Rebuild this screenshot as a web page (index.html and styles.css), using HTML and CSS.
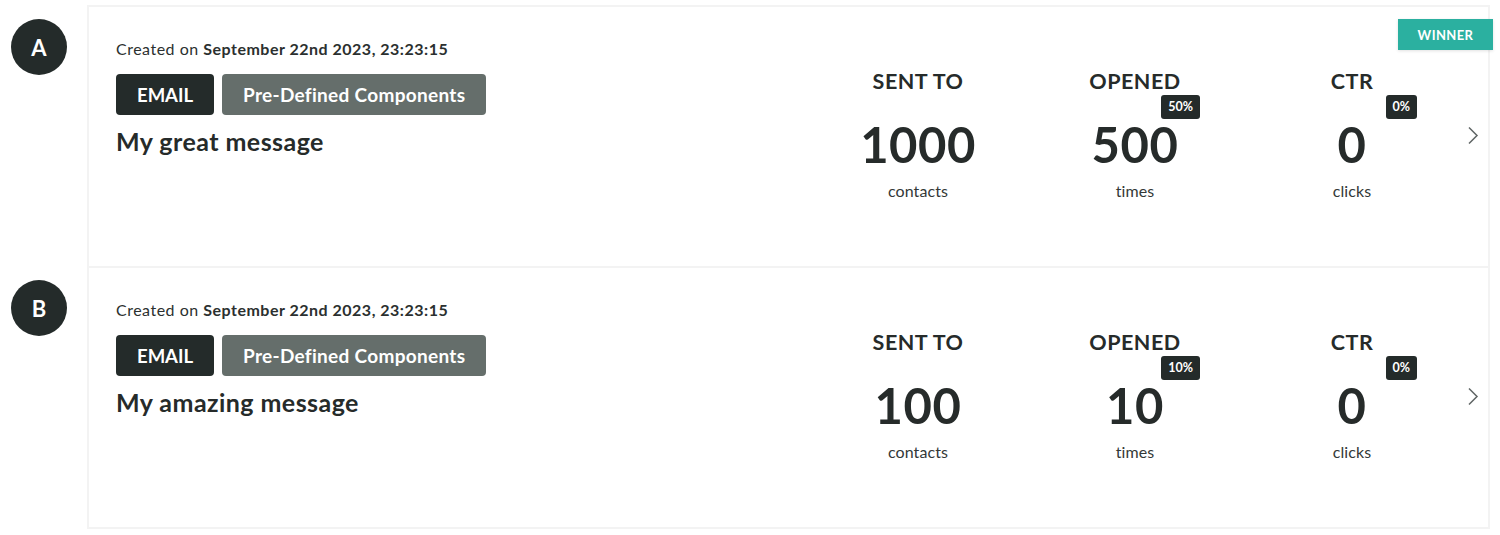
FILE: index.html
```html
<!DOCTYPE html>
<html>
<head>
<meta charset="utf-8">
<link rel="stylesheet" href="styles.css">
</head>
<body>
<div class="page">
  <div class="markers">
    <div class="marker-cell"><div class="marker">A</div></div>
    <div class="marker-cell"><div class="marker">B</div></div>
  </div>
  <div class="card">
    <div class="variant">
      <div class="info">
        <div class="created">Created on <b>September 22nd 2023, 23:23:15</b></div>
        <div class="tags">
          <span class="tag tag-dark">EMAIL</span>
          <span class="tag tag-gray">Pre-Defined Components</span>
        </div>
        <div class="title">My great message</div>
      </div>
      <div class="stats">
        <div class="stat">
          <div class="stat-head">SENT TO</div>
          <div class="stat-badge-row"></div>
          <div class="stat-num">1000</div>
          <div class="stat-label">contacts</div>
        </div>
        <div class="stat">
          <div class="stat-head">OPENED</div>
          <div class="stat-badge-row"><span class="pct">50%</span></div>
          <div class="stat-num">500</div>
          <div class="stat-label">times</div>
        </div>
        <div class="stat">
          <div class="stat-head">CTR</div>
          <div class="stat-badge-row"><span class="pct">0%</span></div>
          <div class="stat-num">0</div>
          <div class="stat-label">clicks</div>
        </div>
      </div>
      <div class="chev">
        <svg width="12" height="19" viewBox="0 0 12 19"><polyline points="2,1.5 10,9.5 2,17.5" fill="none" stroke="#5f6564" stroke-width="1.5"/></svg>
      </div>
      <div class="winner">WINNER</div>
    </div>
    <div class="variant">
      <div class="info">
        <div class="created">Created on <b>September 22nd 2023, 23:23:15</b></div>
        <div class="tags">
          <span class="tag tag-dark">EMAIL</span>
          <span class="tag tag-gray">Pre-Defined Components</span>
        </div>
        <div class="title">My amazing message</div>
      </div>
      <div class="stats">
        <div class="stat">
          <div class="stat-head">SENT TO</div>
          <div class="stat-badge-row"></div>
          <div class="stat-num">100</div>
          <div class="stat-label">contacts</div>
        </div>
        <div class="stat">
          <div class="stat-head">OPENED</div>
          <div class="stat-badge-row"><span class="pct">10%</span></div>
          <div class="stat-num">10</div>
          <div class="stat-label">times</div>
        </div>
        <div class="stat">
          <div class="stat-head">CTR</div>
          <div class="stat-badge-row"><span class="pct">0%</span></div>
          <div class="stat-num">0</div>
          <div class="stat-label">clicks</div>
        </div>
      </div>
      <div class="chev">
        <svg width="12" height="19" viewBox="0 0 12 19"><polyline points="2,1.5 10,9.5 2,17.5" fill="none" stroke="#5f6564" stroke-width="1.5"/></svg>
      </div>
    </div>
  </div>
</div>
</body>
</html>
```

FILE: styles.css
```css
* { box-sizing: border-box; }
html, body { margin: 0; padding: 0; background: #ffffff; }
body {
  font-family: "Lato", "Open Sans", sans-serif;
  color: #262b2a;
}
.page {
  display: flex;
  padding-top: 5px;
}
.markers {
  width: 87px;
  display: flex;
  flex-direction: column;
  padding-top: 2px;
}
.marker-cell {
  height: 261px;
  padding: 12px 0 0 11px;
}
.marker {
  width: 56px;
  height: 56px;
  border-radius: 50%;
  background: #242b2a;
  color: #ffffff;
  display: flex;
  align-items: center;
  justify-content: center;
  font-weight: 700;
  font-size: 22px;
}
.card {
  width: 1403px;
  border: 2px solid #f3f3f3;
}
.variant {
  position: relative;
  height: 259px;
  display: flex;
  align-items: flex-start;
}
.variant + .variant {
  border-top: 2px solid #f3f3f3;
  height: 261px;
}
.info {
  flex: 1;
  padding: 32px 0 0 27px;
}
.created {
  font-size: 16px;
  line-height: 20px;
  letter-spacing: 0.5px;
  color: #2b302f;
}
.created b { font-weight: 700; }
.tags {
  display: flex;
  gap: 8px;
  margin-top: 15px;
}
.tag {
  height: 41px;
  border-radius: 4px;
  display: flex;
  align-items: center;
  padding: 0 21px;
  color: #ffffff;
  font-weight: 700;
  font-size: 18.5px;
}
.tag-dark { background: #242b2a; }
.tag-gray {
  background: #656e6b;
  font-size: 19px;
  letter-spacing: 0.3px;
}
.title {
  margin-top: 11px;
  font-size: 25px;
  line-height: 30px;
  letter-spacing: 0.45px;
  font-weight: 700;
  color: #262b2a;
}
.stats {
  display: flex;
  gap: 87px;
  padding-top: 62px;
}
.stat {
  width: 130px;
  display: flex;
  flex-direction: column;
  align-items: center;
}
.stat-head {
  font-size: 21.5px;
  line-height: 24px;
  letter-spacing: 0.5px;
  font-weight: 700;
  color: #262b2a;
}
.stat-badge-row {
  align-self: stretch;
  height: 24px;
  margin-top: 2px;
  display: flex;
  justify-content: flex-end;
}
.pct {
  background: #242b2a;
  color: #ffffff;
  font-size: 12.5px;
  font-weight: 700;
  height: 24px;
  line-height: 24px;
  padding: 0 7px;
  border-radius: 3px;
}
.stat-num {
  font-size: 49px;
  line-height: 50px;
  letter-spacing: 0.5px;
  font-weight: 700;
  color: #262b2a;
}
.stat-label {
  margin-top: 12px;
  font-size: 16px;
  line-height: 20px;
  letter-spacing: 0.1px;
  color: #333837;
}
.chev {
  width: 71px;
  padding: 119px 0 0 50px;
}
.chev svg { display: block; }
.winner {
  position: absolute;
  top: 12px;
  right: -5px;
  width: 95px;
  height: 31px;
  background: #2bb0a0;
  color: #ffffff;
  font-size: 13px;
  font-weight: 700;
  letter-spacing: 0.4px;
  display: flex;
  align-items: center;
  justify-content: center;
  box-shadow: 0 1px 3px rgba(0,0,0,0.12);
}
```
